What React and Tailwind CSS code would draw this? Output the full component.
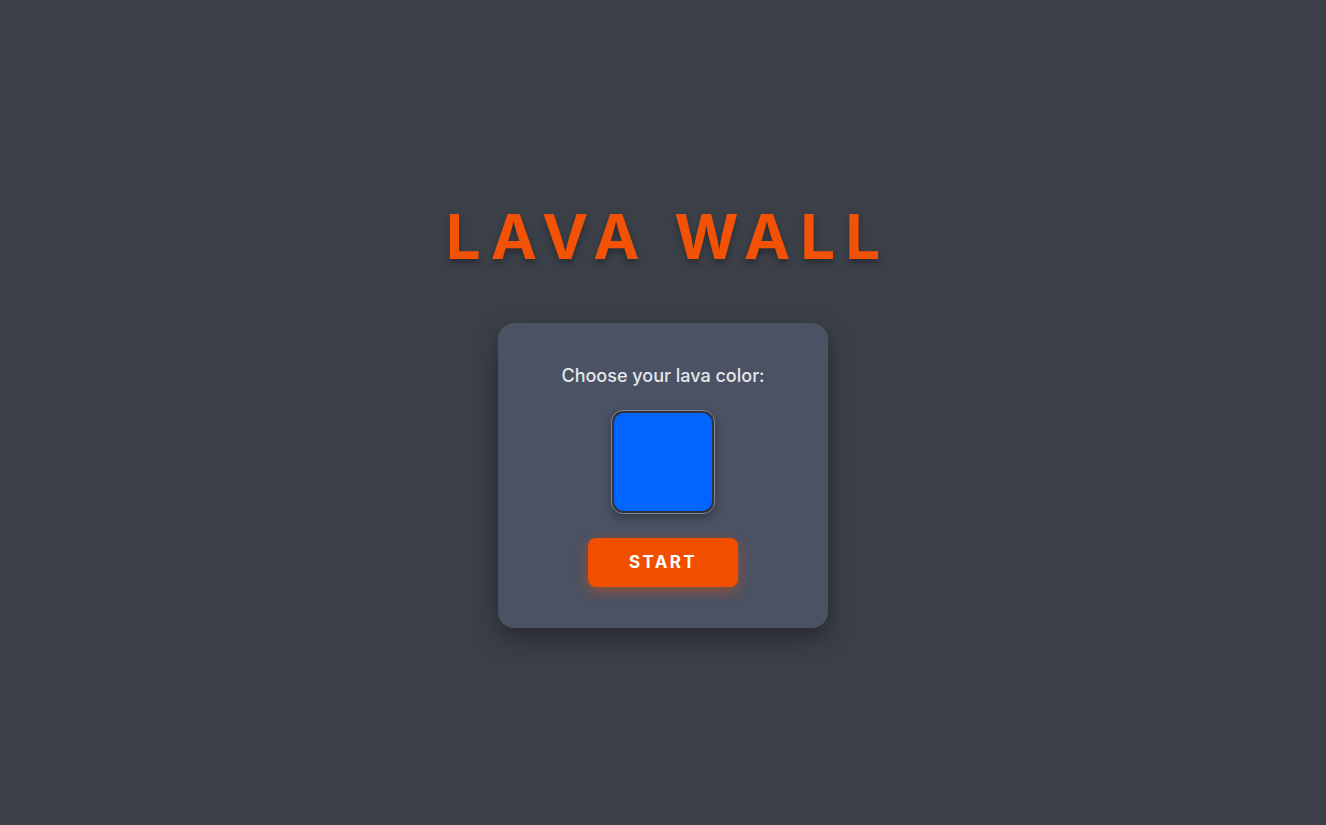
export default function App() {
  return (
    <div className="min-h-screen w-full bg-[#3b3f48] flex flex-col items-center justify-center pt-[9px]" style={{ fontFamily: 'Inter, "Noto Sans", sans-serif' }}>
      <h1 className="text-[62px] leading-none font-bold tracking-[0.16em] text-[#f25205] mb-[55px] pl-[0.16em] [text-shadow:0_4px_6px_rgba(0,0,0,0.3)]">
        LAVA WALL
      </h1>
      <div className="w-[330px] rounded-2xl bg-[#4b5263] shadow-[0_10px_25px_rgba(0,0,0,0.35)] flex flex-col items-center pt-[41px] pb-[41px]">
        <p className="text-[18px] leading-6 font-medium text-[#e5e7eb]">Choose your lava color:</p>
        <div className="mt-[22px] w-[104px] h-[104px] rounded-[12px] border-[1.5px] border-[#80859a] bg-[#30343d] p-[2px] shadow-[0_4px_10px_rgba(0,0,0,0.3)]">
          <div className="w-full h-full rounded-[10px] bg-[#0066ff]" />
        </div>
        <button className="mt-[24px] w-[150px] h-[49px] rounded-lg bg-[#f24e00] text-white font-bold text-[17px] tracking-[0.14em] shadow-[0_4px_14px_rgba(242,78,0,0.45)]">
          START
        </button>
      </div>
    </div>
  );
}
